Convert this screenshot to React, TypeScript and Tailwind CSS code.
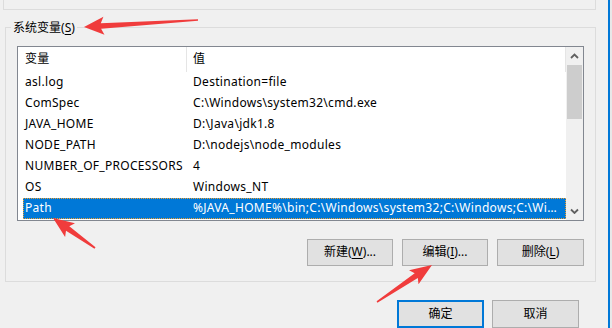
import React from "react";

const ROWS: [string, string][] = [
  ["asl.log", "Destination=file"],
  ["ComSpec", "C:\\Windows\\system32\\cmd.exe"],
  ["JAVA_HOME", "D:\\Java\\jdk1.8"],
  ["NODE_PATH", "D:\\nodejs\\node_modules"],
  ["NUMBER_OF_PROCESSORS", "4"],
  ["OS", "Windows_NT"],
  [
    "Path",
    "%JAVA_HOME%\\bin;C:\\Windows\\system32;C:\\Windows;C:\\Windows\\System32\\Wbem;C:\\Windows\\System32\\WindowsPowerShell\\v1.0\\",
  ],
];

// red annotation arrow: tail -> tip, tapered shaft
function arrowPoints(
  tail: [number, number],
  tip: [number, number],
  headLen: number,
  headHalf: number,
  neckHalf: number,
  tailHalf: number
) {
  const dx = tip[0] - tail[0];
  const dy = tip[1] - tail[1];
  const len = Math.hypot(dx, dy);
  const ux = dx / len;
  const uy = dy / len;
  const nx = -uy;
  const ny = ux;
  const bx = tip[0] - ux * headLen;
  const by = tip[1] - uy * headLen;
  // barbs sit a little behind the neck
  const wx = bx - ux * 3;
  const wy = by - uy * 3;
  const p = (x: number, y: number) => `${x.toFixed(1)},${y.toFixed(1)}`;
  return [
    p(tail[0] + nx * tailHalf, tail[1] + ny * tailHalf),
    p(bx + nx * neckHalf, by + ny * neckHalf),
    p(wx + nx * headHalf, wy + ny * headHalf),
    p(tip[0], tip[1]),
    p(wx - nx * headHalf, wy - ny * headHalf),
    p(bx - nx * neckHalf, by - ny * neckHalf),
    p(tail[0] - nx * tailHalf, tail[1] - ny * tailHalf),
  ].join(" ");
}

const Chevron: React.FC<{ down?: boolean }> = ({ down }) => (
  <svg width="9" height="6" viewBox="0 0 9 6">
    <polyline
      points={down ? "1,1.5 4.5,5 8,1.5" : "1,5 4.5,1.5 8,5"}
      fill="none"
      stroke="#606060"
      strokeWidth="1.8"
    />
  </svg>
);

const Mn: React.FC<{ pre: string; k: string; post?: string }> = ({ pre, k, post }) => (
  <span>
    {pre}(<span className="underline underline-offset-2">{k}</span>){post}
  </span>
);

const Button: React.FC<{ children: React.ReactNode; primary?: boolean }> = ({ children, primary }) => (
  <div
    className={
      primary
        ? "w-[87px] h-[28px] flex items-center justify-center bg-[#e1e1e1] border-2 border-[#0078d7]"
        : "w-[87px] h-[28px] flex items-center justify-center bg-[#e1e1e1] border border-[#adadad]"
    }
  >
    {children}
  </div>
);

export default function App() {
  return (
    <div
      className="relative w-[612px] h-[328px] overflow-hidden bg-[#f0f0f0] flex text-[12px] leading-[16px] text-black"
      style={{ fontFamily: '"Segoe UI", "Noto Sans", "Noto Sans CJK SC", sans-serif' }}
    >
      {/* dialog body */}
      <div className="w-[608px] pl-[3px] flex flex-col">
        {/* bottom of the previous group box */}
        <div className="w-[593px] h-[10px] border-l border-r border-b border-[#dcdcdc]" />

        {/* 系统变量 group */}
        <fieldset className="mt-[10px] ml-[2px] w-[591px] h-[264px] border border-[#dcdcdc]">
          <legend className="ml-[5px] px-[2px] leading-[16px]">
            <Mn pre="系统变量" k="S" />
          </legend>

          <div className="pl-[11px] pt-[10px] w-[578px]">
            {/* list view */}
            <div className="w-[567px] h-[175px] border border-[#828790] bg-white flex">
              <div className="flex-1 min-w-0 overflow-hidden flex flex-col tracking-[0.3px]">
                {/* header */}
                <div className="h-[25px] flex items-center">
                  <div className="w-[169px] h-full pl-[7px] flex items-center border-r border-[#e5e5e5]">
                    变量
                  </div>
                  <div className="flex-1 h-full pl-[6px] flex items-center border-r border-[#e5e5e5]">
                    值
                  </div>
                </div>
                {/* rows */}
                <div className="pl-[5px] flex flex-col">
                  {ROWS.map(([name, value], i) => {
                    const sel = i === ROWS.length - 1;
                    return (
                      <div
                        key={name}
                        className={
                          sel
                            ? "h-[21px] min-w-0 flex items-center border border-dotted border-[#f0a030] bg-[#0078d7] text-white"
                            : "h-[21px] min-w-0 flex items-center border border-transparent"
                        }
                      >
                        <div className="w-[162px] shrink-0 pl-[1px] whitespace-nowrap">{name}</div>
                        <div className="flex-1 min-w-0 pl-[7px] pr-[8px] whitespace-nowrap overflow-hidden text-ellipsis">
                          {value}
                        </div>
                      </div>
                    );
                  })}
                </div>
              </div>

              {/* scrollbar */}
              <div className="w-[17px] shrink-0 bg-[#f0f0f0] flex flex-col items-center">
                <div className="h-[18px] w-full flex items-center justify-center">
                  <Chevron />
                </div>
                <div className="w-[15px] h-[54px] bg-[#cdcdcd]" />
                <div className="flex-1" />
                <div className="h-[17px] w-full flex items-center justify-center">
                  <Chevron down />
                </div>
              </div>
            </div>

            {/* list actions */}
            <div className="mt-[18px] w-[567px] flex justify-end gap-[9px]">
              <div className="w-[86px] h-[27px] flex items-center justify-center bg-[#e1e1e1] border border-[#adadad]">
                <Mn pre="新建" k="W" post="..." />
              </div>
              <div className="w-[86px] h-[27px] flex items-center justify-center bg-[#e1e1e1] border border-[#adadad]">
                <Mn pre="编辑" k="I" post="..." />
              </div>
              <div className="w-[87px] h-[27px] flex items-center justify-center bg-[#e1e1e1] border border-[#adadad]">
                <Mn pre="删除" k="L" />
              </div>
            </div>
          </div>
        </fieldset>

        {/* dialog buttons */}
        <div className="mt-[18px] w-[576px] flex justify-end gap-[8px]">
          <Button primary>确定</Button>
          <Button>取消</Button>
        </div>
      </div>

      {/* window edge */}
      <div className="w-[2px] h-full bg-[#0078d7]" />
      <div className="flex-1 h-full bg-[#e8e8e8]" />

      {/* annotation arrows */}
      <svg className="absolute inset-0 pointer-events-none" width="612" height="328">
        <polygon points={arrowPoints([198, 20], [84, 27], 17, 9, 2.8, 0.8)} fill="#f03c3c" />
        <polygon points={arrowPoints([95, 248], [53, 218], 18, 8.5, 2.8, 0.8)} fill="#f03c3c" />
        <polygon points={arrowPoints([377, 302], [432, 265], 19, 8.5, 2.8, 0.8)} fill="#f03c3c" />
      </svg>
    </div>
  );
}
